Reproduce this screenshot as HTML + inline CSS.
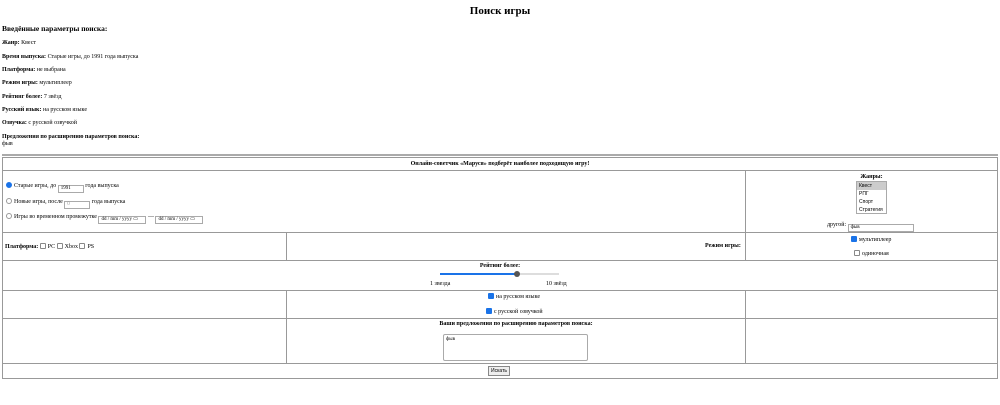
<!DOCTYPE html>
<html><head><meta charset="utf-8"><style>
*{box-sizing:border-box}
body{margin:0;width:1000px;height:405px;background:#fff;font-family:"Liberation Serif","Noto Serif CJK SC",serif;color:#000;position:relative;overflow:hidden}
.a{position:absolute;white-space:nowrap;font-size:6px}
b{font-weight:bold}
.h{position:absolute;height:1px;background:#999}
.v{position:absolute;width:1px;background:#999}
.rad{display:inline-block;width:6px;height:6px;border:1px solid #999;border-radius:50%;vertical-align:-1px;margin-right:2px}
.cb{display:inline-block;width:6px;height:6px;border:1px solid #888;border-radius:1px;vertical-align:-1px;margin-right:2px}
.cbon{background:#1a73e8;border-color:#1a73e8}
.inp{display:inline-block;border:1px solid #aaa;height:8px;vertical-align:-2px;font-size:5px;line-height:6px;padding:0 2px}
</style></head><body>
<div class="a" style="left:0;width:1000px;text-align:center;top:5px;font-size:11px;font-weight:bold">Поиск игры</div>
<div class="a" style="left:2px;top:24px;font-size:7.5px;font-weight:bold">Введённые параметры поиска:</div>
<div class="a" style="left:2px;top:40px"><b>Жанр:</b> Квест</div>
<div class="a" style="left:2px;top:54px"><b>Время выпуска:</b> Старые игры, до 1991 года выпуска</div>
<div class="a" style="left:2px;top:67px"><b>Платформа:</b> не выбрана</div>
<div class="a" style="left:2px;top:80px"><b>Режим игры:</b> мультиплеер</div>
<div class="a" style="left:2px;top:94px"><b>Рейтинг более:</b> 7 звёзд</div>
<div class="a" style="left:2px;top:107px"><b>Русский язык:</b> на русском языке</div>
<div class="a" style="left:2px;top:120px"><b>Озвучка:</b> с русской озвучкой</div>
<div class="a" style="left:2px;top:134px;line-height:7px"><b>Предложения по расширению параметров поиска:</b><br>фыв</div>
<div class="h" style="left:2px;width:996px;top:154px;height:2px;background:#aaa"></div>
<div class="h" style="left:2px;width:996px;top:157px"></div>
<div class="h" style="left:2px;width:996px;top:170px"></div>
<div class="h" style="left:2px;width:996px;top:232px"></div>
<div class="h" style="left:2px;width:996px;top:260px"></div>
<div class="h" style="left:2px;width:996px;top:290px"></div>
<div class="h" style="left:2px;width:996px;top:318px"></div>
<div class="h" style="left:2px;width:996px;top:363px"></div>
<div class="h" style="left:2px;width:996px;top:378px"></div>
<div class="v" style="left:2px;top:157px;height:222px"></div>
<div class="v" style="left:997px;top:157px;height:222px"></div>
<div class="v" style="left:745px;top:170px;height:90px"></div>
<div class="v" style="left:286px;top:232px;height:28px"></div>
<div class="v" style="left:286px;top:290px;height:73px"></div>
<div class="v" style="left:745px;top:290px;height:73px"></div>
<div class="a" style="left:0;width:1000px;text-align:center;top:161px;font-weight:bold">Онлайн-советчик «Маруся» подберёт наиболее подходящую игру!</div>
<div class="a" style="left:6px;top:182px"><span class="rad" style="background:#1a73e8;border-color:#1a73e8"></span>Старые игры, до <span class="inp" style="width:26px">1991</span> года выпуска</div>
<div class="a" style="left:6px;top:198px"><span class="rad"></span>Новые игры, после <span class="inp" style="width:26px;color:#999">0</span> года выпуска</div>
<div class="a" style="left:6px;top:213px"><span class="rad"></span>Игры во временном промежутке <span class="inp" style="width:48px">dd / mm / yyyy ▭</span> — <span class="inp" style="width:48px">dd / mm / yyyy ▭</span></div>
<div class="a" style="left:745px;width:253px;text-align:center;top:174px;font-weight:bold">Жанры:</div>
<div class="a" style="left:856px;top:181px;width:31px;height:33px;border:1px solid #aaa;font-family:'Liberation Sans',sans-serif;font-size:5px;line-height:8px">
<div style="background:#ccc;padding-left:2px">Квест</div><div style="padding-left:2px">РПГ</div><div style="padding-left:2px">Спорт</div><div style="padding-left:2px">Стратегия</div></div>
<div class="a" style="left:827px;top:222px">другой: <span class="inp" style="width:66px">фыв</span></div>
<div class="a" style="left:5px;top:243px"><b>Платформа:</b> <span class="cb"></span>PC <span class="cb"></span>Xbox <span class="cb"></span>PS</div>
<div class="a" style="left:705px;top:243px;font-weight:bold">Режим игры:</div>
<div class="a" style="left:851px;top:236px"><span class="cb cbon"></span>мультиплеер</div>
<div class="a" style="left:854px;top:250px"><span class="cb"></span>одиночная</div>
<div class="a" style="left:0;width:1000px;text-align:center;top:263px;font-weight:bold">Рейтинг более:</div>
<div style="position:absolute;left:440px;top:273px;width:78px;height:2px;background:#1a73e8"></div>
<div style="position:absolute;left:518px;top:273px;width:41px;height:2px;background:#ddd"></div>
<div style="position:absolute;left:514px;top:271px;width:6px;height:6px;border-radius:50%;background:#555"></div>
<div class="a" style="left:430px;top:281px">1 звезда</div>
<div class="a" style="left:546px;top:281px">10 звёзд</div>
<div class="a" style="left:488px;top:293px"><span class="cb cbon"></span>на русском языке</div>
<div class="a" style="left:486px;top:308px"><span class="cb cbon"></span>с русской озвучкой</div>
<div class="a" style="left:0;width:1032px;text-align:center;top:321px;font-weight:bold">Ваши предложения по расширению параметров поиска:</div>
<div class="a" style="left:443px;top:334px;width:145px;height:27px;border:1px solid #aaa;border-radius:2px;font-size:5px;padding:2px">фыв</div>
<div class="a" style="left:488px;top:366px;width:22px;height:10px;border:1px solid #888;background:#eee;font-family:'Liberation Sans',sans-serif;font-size:5px;line-height:8px;text-align:center">Искать</div>
</body></html>
